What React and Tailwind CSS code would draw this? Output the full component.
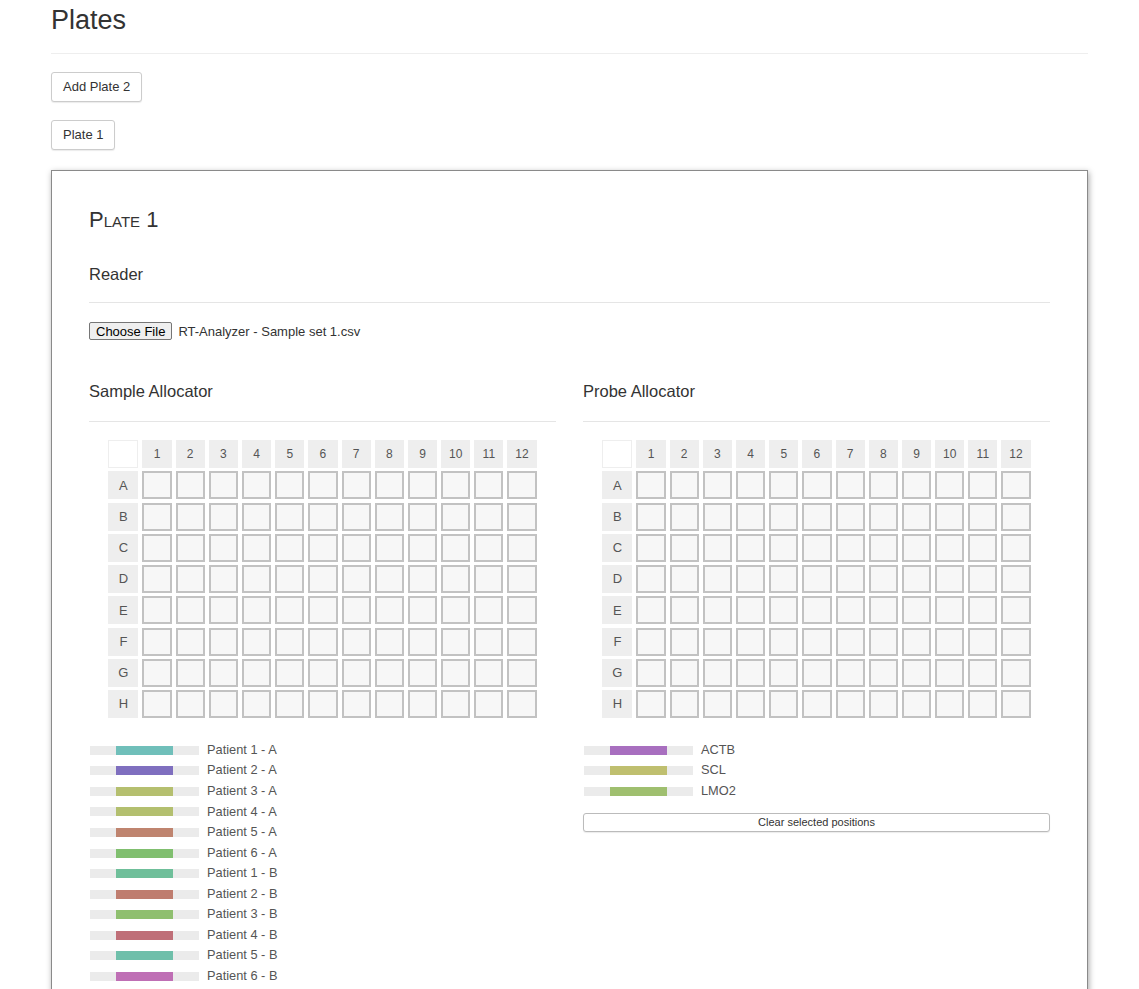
import React from "react";

const cols = [1, 2, 3, 4, 5, 6, 7, 8, 9, 10, 11, 12];
const rows = ["A", "B", "C", "D", "E", "F", "G", "H"];

const samples = [
  ["Patient 1 - A", "#70bfba"],
  ["Patient 2 - A", "#7f6fbf"],
  ["Patient 3 - A", "#b5bf6f"],
  ["Patient 4 - A", "#b3bf6f"],
  ["Patient 5 - A", "#bf846f"],
  ["Patient 6 - A", "#80bf6f"],
  ["Patient 1 - B", "#6fbf9a"],
  ["Patient 2 - B", "#bf7d6f"],
  ["Patient 3 - B", "#8fbf6f"],
  ["Patient 4 - B", "#bf6f78"],
  ["Patient 5 - B", "#6fbfaa"],
  ["Patient 6 - B", "#bf6fb5"],
];

const probes = [
  ["ACTB", "#a86fbf"],
  ["SCL", "#bfbf6f"],
  ["LMO2", "#9fbf6f"],
];

function Grid() {
  return (
    <div className="flex justify-center">
      <div className="grid grid-cols-[30px_repeat(12,29.2px)] auto-rows-[28px] gap-x-[4px] gap-y-[3.25px]">
        <div className="bg-white border border-[#eeeeee]" />
        {cols.map((c) => (
          <div key={c} className="bg-[#eeeeee] flex items-center justify-center text-[12px] text-[#555]">
            {c}
          </div>
        ))}
        {rows.map((r) => (
          <React.Fragment key={r}>
            <div className="bg-[#eeeeee] flex items-center justify-center text-[13px] text-[#555]">{r}</div>
            {cols.map((c) => (
              <div key={c} className="bg-[#f7f7f7] border-2 border-[#c2c2c2]" />
            ))}
          </React.Fragment>
        ))}
      </div>
    </div>
  );
}

function Legend({ items }) {
  return (
    <div className="mt-[22px] flex flex-col">
      {items.map(([label, color]) => (
        <div key={label} className="h-[20.55px] flex items-center">
          <div className="w-[109px] h-[9px] bg-[#ebebeb] ml-px flex">
            <div className="ml-[26px] w-[57px] h-[9px]" style={{ backgroundColor: color }} />
          </div>
          <span className="ml-[8px] text-[12.8px] text-[#555] leading-none">{label}</span>
        </div>
      ))}
    </div>
  );
}

function Section({ title }) {
  return (
    <>
      <h3 className="mt-[41px] text-[16.5px] leading-[20px] text-[#333]">{title}</h3>
      <div className="mt-[20px] border-t border-[#e5e5e5]" />
    </>
  );
}

export default function App() {
  return (
    <div className="min-h-screen bg-white text-[#333]" style={{ fontFamily: '"Liberation Sans", Arial, sans-serif' }}>
      <div className="w-[1037px] mx-auto">
        <h1 className="pt-[5px] text-[27px] leading-[30px] text-[#333]">Plates</h1>
        <div className="mt-[18px] border-t border-[#eeeeee]" />
        <div className="mt-[18px]">
          <button className="h-[30px] px-[11px] border border-[#cccccc] rounded-[3px] bg-white text-[13px] text-[#333] shadow-[0_1px_1px_rgba(0,0,0,0.08)]">
            Add Plate 2
          </button>
        </div>
        <div className="mt-[18px]">
          <button className="h-[30px] px-[11px] border border-[#cccccc] rounded-[3px] bg-white text-[13px] text-[#333] shadow-[0_1px_1px_rgba(0,0,0,0.08)]">
            Plate 1
          </button>
        </div>
        <div className="mt-[20px] border border-[#8a8a8a] shadow-[1px_2px_6px_rgba(0,0,0,0.35)] bg-white px-[37px] pt-[37px] pb-[40px]">
          <h2 className="text-[22px] leading-[24px] text-[#333] [font-variant:small-caps]">Plate 1</h2>
          <h3 className="mt-[32px] text-[16.5px] leading-[20px] text-[#333]">Reader</h3>
          <div className="mt-[18px] border-t border-[#e5e5e5]" />
          <div className="mt-[19px] flex items-center h-[18px]">
            <button className="h-[18px] px-[6px] bg-[#efefef] border border-[#767676] rounded-[2px] text-[13px] leading-none text-black">
              Choose File
            </button>
            <span className="ml-[6px] text-[13px] leading-none text-[#333]">RT-Analyzer - Sample set 1.csv</span>
          </div>
          <div className="grid grid-cols-2 gap-x-[27px]">
            <div>
              <Section title="Sample Allocator" />
              <div className="mt-[18px]">
                <Grid />
              </div>
              <Legend items={samples} />
            </div>
            <div>
              <Section title="Probe Allocator" />
              <div className="mt-[18px]">
                <Grid />
              </div>
              <Legend items={probes} />
              <button className="mt-[11px] w-full h-[19px] border border-[#bbbbbb] rounded-[3px] bg-white text-[11px] leading-none text-[#333] shadow-[0_1px_1px_rgba(0,0,0,0.08)]">
                Clear selected positions
              </button>
            </div>
          </div>
        </div>
      </div>
    </div>
  );
}
